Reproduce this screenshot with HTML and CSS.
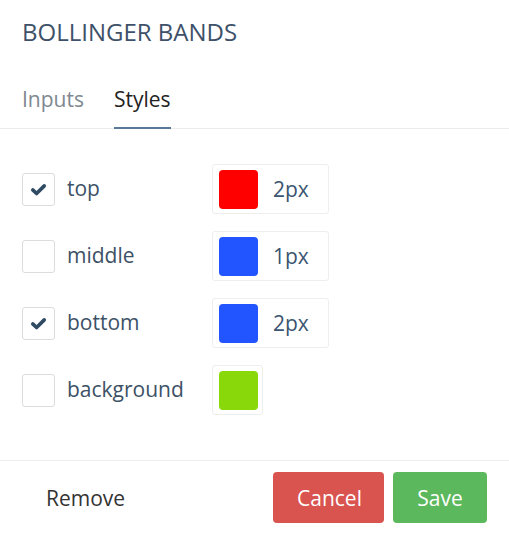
FILE: index.html
```html
<!DOCTYPE html>
<html>
<head>
<meta charset="utf-8">
<link rel="stylesheet" href="styles.css">
</head>
<body>
<div class="dialog">
  <div class="title">BOLLINGER BANDS</div>
  <div class="tabs">
    <div class="tab">Inputs</div>
    <div class="tab active">Styles</div>
  </div>
  <div class="content">
    <div class="row">
      <div class="check checked"><svg viewBox="0 0 16 16" width="17" height="17"><path d="M2.6 8.4 L6.2 11.8 L13.4 4.6" fill="none" stroke="#2f4b63" stroke-width="3.4" stroke-linecap="round" stroke-linejoin="round"/></svg></div>
      <div class="label">top</div>
      <div class="swatch"><span class="color red"></span><span class="value">2px</span></div>
    </div>
    <div class="row">
      <div class="check"></div>
      <div class="label">middle</div>
      <div class="swatch"><span class="color blue"></span><span class="value">1px</span></div>
    </div>
    <div class="row">
      <div class="check checked"><svg viewBox="0 0 16 16" width="17" height="17"><path d="M2.6 8.4 L6.2 11.8 L13.4 4.6" fill="none" stroke="#2f4b63" stroke-width="3.4" stroke-linecap="round" stroke-linejoin="round"/></svg></div>
      <div class="label">bottom</div>
      <div class="swatch"><span class="color blue"></span><span class="value">2px</span></div>
    </div>
    <div class="row">
      <div class="check"></div>
      <div class="label">background</div>
      <div class="swatch only"><span class="color green"></span></div>
    </div>
  </div>
  <div class="footer">
    <button class="btn remove">Remove</button>
    <div class="actions">
      <button class="btn cancel">Cancel</button>
      <button class="btn save">Save</button>
    </div>
  </div>
</div>
</body>
</html>
```
FILE: styles.css
```css
html, body {
  margin: 0;
  padding: 0;
  background: #fff;
}
body {
  font-family: "Open Sans", "Liberation Sans", sans-serif;
  color: #3d5166;
}
.dialog {
  width: 509px;
  height: 533px;
  display: flex;
  flex-direction: column;
}
.title {
  font-size: 24px;
  line-height: 32px;
  padding: 16px 22px 0;
  color: #3e5169;
}
.tabs {
  display: flex;
  gap: 30px;
  padding: 0 22px;
  margin-top: 37px;
  border-bottom: 1px solid #ececec;
}
.tab {
  font-size: 21px;
  line-height: 28px;
  color: #808890;
  padding-bottom: 14px;
  border-bottom: 2px solid transparent;
  margin-bottom: -1px;
}
.tab.active {
  color: #222;
  border-bottom-color: #5a7898;
}
.content {
  display: flex;
  flex-direction: column;
  gap: 17px;
  padding: 35px 22px 0;
  flex: 1;
}
.row {
  display: flex;
  align-items: center;
  height: 50px;
}
.check {
  width: 31px;
  height: 31px;
  border: 1px solid #dcdcdc;
  border-radius: 3px;
  display: flex;
  align-items: center;
  justify-content: center;
  flex: none;
}
.label {
  font-size: 21px;
  margin-left: 12px;
  width: 145px;
  color: #3d5166;
  line-height: 28px;
  padding-bottom: 3px;
}
.swatch {
  display: flex;
  align-items: center;
  box-sizing: border-box;
  width: 117px;
  height: 50px;
  border: 1px solid #eeeeee;
  border-radius: 3px;
  padding: 0 6px;
}
.swatch.only {
  width: 51px;
}
.color {
  width: 39px;
  height: 39px;
  border-radius: 4px;
  flex: none;
}
.red { background: #ff0000; }
.blue { background: #2254ff; }
.green { background: #89d90a; }
.value {
  margin-left: 15px;
  font-size: 21px;
  color: #3a5570;
}
.footer {
  border-top: 1px solid #eeeeee;
  display: flex;
  align-items: center;
  justify-content: space-between;
  padding: 11px 22px 10px;
}
.actions {
  display: flex;
  gap: 9px;
}
.btn {
  font-family: "Open Sans", "Liberation Sans", sans-serif;
  font-size: 21px;
  height: 51px;
  border: none;
  border-radius: 4px;
  padding: 0 24px;
  color: #fff;
  cursor: pointer;
}
.remove {
  background: #fff;
  color: #333;
}
.cancel {
  background: #d9534f;
  width: 111px;
}
.save {
  background: #5cb85c;
  width: 94px;
}
```
